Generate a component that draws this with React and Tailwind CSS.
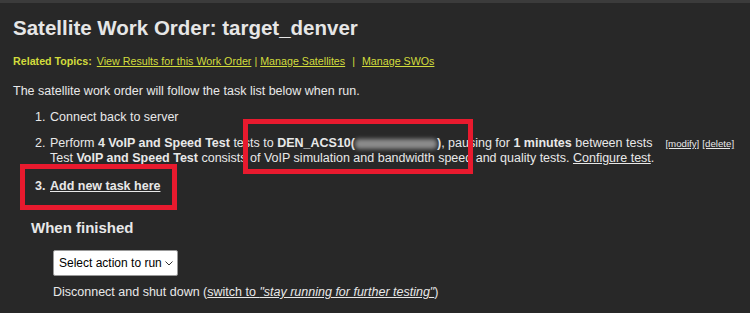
import React from 'react';

const sans = { fontFamily: '"Liberation Sans", Arial, sans-serif' };

function App() {
  return (
    <div
      className="relative w-[750px] h-[313px] overflow-hidden bg-[#282828] text-[#e8e8e8] border-t-[3px] border-[#3b3b3b]"
      style={sans}
    >
      <div className="pl-[13px] pt-[13px]">
        {/* Title */}
        <h1 className="text-[20.5px] font-bold leading-[24px] text-[#e6e6e6]">
          Satellite Work Order: target_denver
        </h1>

        {/* Related topics */}
        <div className="mt-[15px] text-[10.7px] leading-[13px] text-[#d2dc3c]">
          <span className="font-bold">Related Topics:</span>
          <span className="ml-[5px] underline">View Results for this Work Order</span>
          <span className="mx-[3px]">|</span>
          <span className="underline">Manage Satellites</span>
          <span className="mx-[7px]">|</span>
          <span className="underline">Manage SWOs</span>
        </div>

        <p className="mt-[16px] text-[12.5px] leading-[15px]">
          The satellite work order will follow the task list below when run.
        </p>

        {/* Task list */}
        <ol className="mt-[11px] pl-[36px] list-decimal text-[12.5px] leading-[14px]">
          <li className="pl-[1px]">Connect back to server</li>
          <li className="pl-[1px] mt-[12px]">
            <div className="flex items-baseline">
              <span>
                Perform <b>4 VoIP and Speed Test</b> tests to <b>DEN_ACS10(</b>
                <span className="inline-block align-middle w-[82px] h-[10px] bg-[#8c8c8c] blur-[2px] rounded-sm"></span>
                <b>)</b>, pausing for <b>1 minutes</b> between tests
              </span>
              <span className="ml-[13px] text-[9.7px] underline">[modify]</span>
              <span className="ml-[3px] text-[9.7px] underline">[delete]</span>
            </div>
            <div>
              Test <b>VoIP and Speed Test</b> consists of VoIP simulation and bandwidth speed and quality tests.{' '}
              <span className="underline">Configure test</span>.
            </div>
          </li>
          <li className="pl-[1px] mt-[14px] font-bold">
            <span className="underline">Add new task here</span>
          </li>
        </ol>

        {/* When finished */}
        <h2 className="mt-[26px] ml-[18px] text-[15px] font-bold leading-[18px]">When finished</h2>
        <div className="mt-[13px] ml-[40px]">
          <div className="inline-flex items-center h-[26px] pl-[5px] pr-[4px] bg-white border border-[#999] rounded-[2px] text-[12px] text-black">
            Select action to run
            <svg className="ml-[3px]" width="8" height="5" viewBox="0 0 8 5">
              <path d="M0.5 0.5 L4 4 L7.5 0.5" fill="none" stroke="#333" strokeWidth="1" />
            </svg>
          </div>
          <p className="mt-[9px] text-[12.5px] leading-[15px]">
            Disconnect and shut down (<span className="underline">switch to <i>"stay running for further testing"</i></span>)
          </p>
        </div>
      </div>

      {/* Red annotation boxes */}
      <div className="absolute left-[243px] top-[116px] w-[230px] h-[55px] border-[5px] border-[#e81a2e]"></div>
      <div className="absolute left-[20px] top-[161px] w-[157px] h-[46px] border-[5px] border-[#e81a2e]"></div>
    </div>
  );
}

export default App;
